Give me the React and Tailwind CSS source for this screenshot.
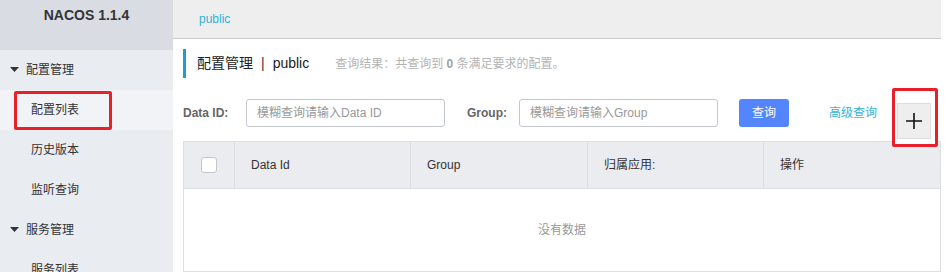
import React from "react";

const font = { fontFamily: '"Liberation Sans", "Noto Sans CJK SC", sans-serif' };

function Caret() {
  return (
    <svg width="9" height="6" viewBox="0 0 9 6" className="mr-[7px]">
      <path d="M0 0 L9 0 L4.5 5 Z" fill="#333" />
    </svg>
  );
}

function Sidebar() {
  return (
    <div className="relative w-[173px] shrink-0 bg-[#e9ecf1] text-[12px] text-[#333]">
      <div className="h-[50px] bg-[#d9dde3] pt-[7px] text-center text-[14px] font-bold text-[#333] leading-[16px]">NACOS 1.1.4</div>
      <div className="flex h-[40px] items-center pl-[10px]"><Caret />配置管理</div>
      <div className="flex h-[40px] items-center bg-[#f2f3f6] pl-[31px]">配置列表</div>
      <div className="flex h-[40px] items-center pl-[31px]">历史版本</div>
      <div className="flex h-[40px] items-center pl-[31px]">监听查询</div>
      <div className="flex h-[40px] items-center pl-[10px]"><Caret />服务管理</div>
      <div className="flex h-[40px] items-center pl-[31px]">服务列表</div>
      <div className="absolute left-[14px] top-[91px] h-[39px] w-[98px] rounded-[2px] border-[3px] border-[#e8202a]" />
    </div>
  );
}

export default function App() {
  return (
    <div className="flex h-[272px] w-[947px] overflow-hidden bg-white" style={font}>
      <Sidebar />
      <div className="relative flex-1">
        <div className="mr-[6px] flex h-[39px] items-center border-b border-[#cccccc] bg-[#eeeeee] pl-[26px] text-[12px] text-[#2fb3d9]">public</div>
        <div className="pl-[10px] pr-[6px]">
          <div className="mt-[10px] flex h-[29px] items-center border-l-[3px] border-[#1a9fd0] pl-[11px]">
            <span className="text-[14px] text-[#222]">配置管理</span>
            <span className="mx-[8px] text-[14px] text-[#333]">|</span>
            <span className="text-[14px] text-[#222]">public</span>
            <span className="ml-[26px] text-[12px] text-[#b3b3b3]">查询结果：共查询到 <b className="text-[#a0a0a0]">0</b> 条满足要求的配置。</span>
          </div>
          <div className="mt-[21px] flex h-[28px] items-center">
            <span className="w-[63px] text-[12px] font-bold text-[#666]">Data ID:</span>
            <div className="flex h-[28px] w-[199px] items-center rounded-[3px] border border-[#c4c6cf] pl-[10px] text-[12px] text-[#999]">模糊查询请输入Data ID</div>
            <span className="ml-[22px] w-[52px] text-[12px] font-bold text-[#666]">Group:</span>
            <div className="flex h-[28px] w-[199px] items-center rounded-[3px] border border-[#c4c6cf] pl-[10px] text-[12px] text-[#999]">模糊查询请输入Group</div>
            <div className="ml-[21px] flex h-[28px] w-[50px] items-center justify-center rounded-[3px] bg-[#5584ff] text-[12px] text-white">查询</div>
            <span className="ml-[40px] text-[12px] text-[#2fb3d9]">高级查询</span>
          </div>
          <div className="mt-[14px] border border-[#dcdee3]">
            <div className="flex h-[47px] border-b border-[#dcdee3] bg-[#ebecf0] text-[12px] text-[#333]">
              <div className="flex w-[51px] items-center justify-center border-r border-[#dcdee3]">
                <div className="h-[16px] w-[16px] rounded-[3px] border border-[#c4c6cf] bg-white" />
              </div>
              <div className="flex w-[176px] items-center border-r border-[#dcdee3] pl-[16px]">Data Id</div>
              <div className="flex w-[177px] items-center border-r border-[#dcdee3] pl-[16px]">Group</div>
              <div className="flex w-[176px] items-center border-r border-[#dcdee3] pl-[16px]">归属应用:</div>
              <div className="flex flex-1 items-center pl-[16px]">操作</div>
            </div>
            <div className="flex h-[82px] items-center justify-center text-[12px] text-[#999]">没有数据</div>
          </div>
        </div>
        <div className="absolute left-[719px] top-[88px] h-[59px] w-[46px] rounded-[2px] border-[3px] border-[#e8202a] bg-white">
          <div className="ml-[2px] mt-[12px] flex h-[36px] w-[34px] items-center justify-center border border-[#dddddd] bg-[#eeeeee]">
            <svg width="18" height="18" viewBox="0 0 18 18">
              <path d="M9 1 V17 M1 9 H17" stroke="#111" strokeWidth="1.6" />
            </svg>
          </div>
        </div>
      </div>
    </div>
  );
}
